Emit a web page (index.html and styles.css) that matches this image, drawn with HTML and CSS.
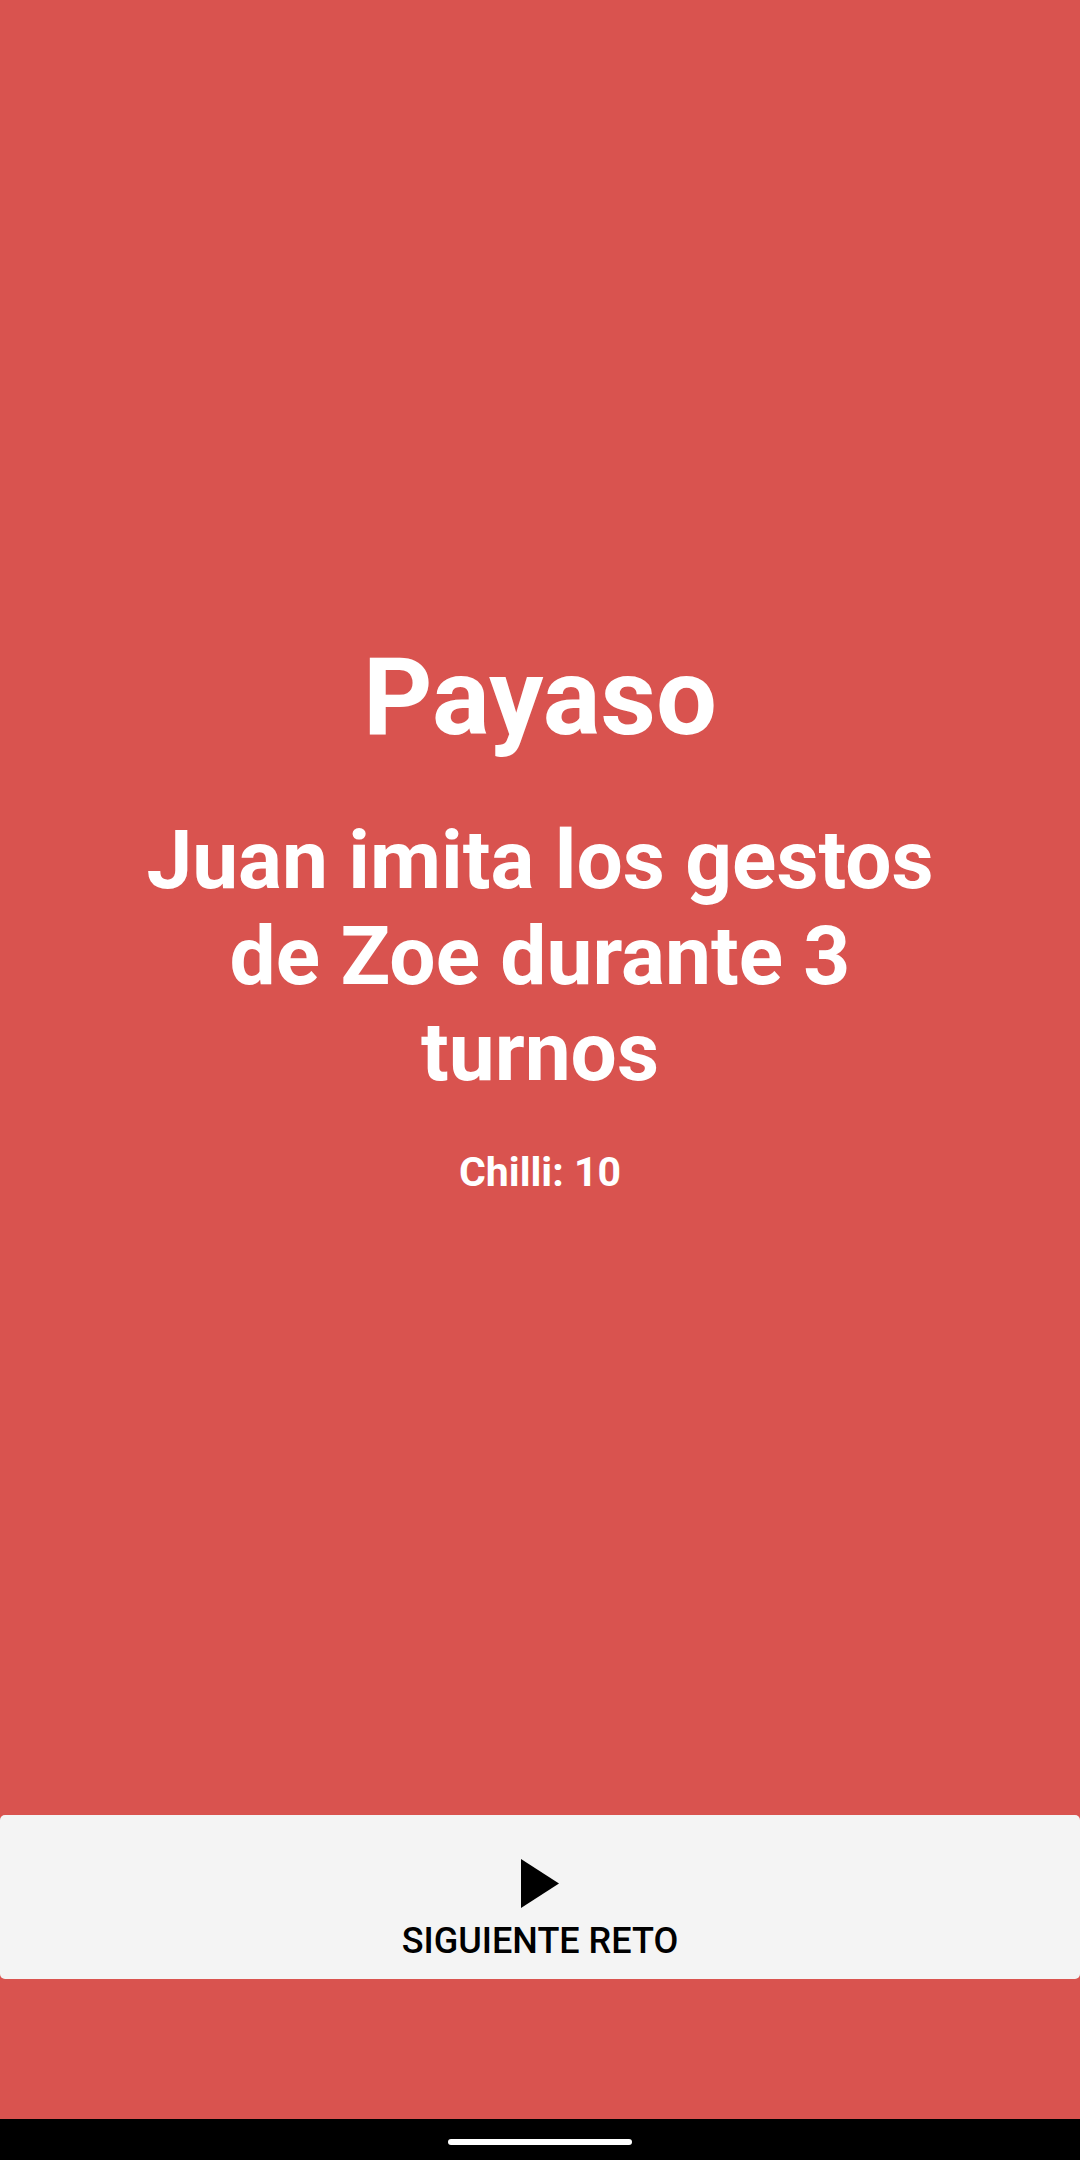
FILE: index.html
```html
<!DOCTYPE html>
<html lang="es">
<head>
<meta charset="utf-8">
<meta name="viewport" content="width=device-width, initial-scale=1">
<title>Payaso</title>
<link rel="stylesheet" href="styles.css">
</head>
<body>
<main class="challenge">
  <section class="card">
    <h1 class="title">Payaso</h1>
    <p class="description">Juan imita los gestos de Zoe durante 3 turnos</p>
    <p class="score">Chilli: 10</p>
  </section>
  <button class="next" type="button">
    <svg class="next-icon" viewBox="0 0 38 49" aria-hidden="true"><path d="M0 0v49l38-24.500z"/></svg>
    <span>SIGUIENTE RETO</span>
  </button>
</main>
<footer class="navbar"><div class="handle"></div></footer>
</body>
</html>
```

FILE: styles.css
```css
* {
  box-sizing: border-box;
}

body {
  margin: 0;
  min-height: 100vh;
  display: flex;
  flex-direction: column;
  background: #d9534f;
  color: #fff;
  font-family: Roboto, "Liberation Sans", sans-serif;
}

.challenge {
  flex: 1;
  display: flex;
  flex-direction: column;
  padding-bottom: 140px;
}

.card {
  flex: 1;
  display: flex;
  flex-direction: column;
  align-items: center;
  justify-content: center;
  gap: 48px;
  padding: 10px 136px 0;
  text-align: center;
  font-weight: 700;
}

.title,
.description,
.score {
  margin: 0;
}

.title {
  font-size: 108px;
  line-height: 134px;
}

.description {
  font-size: 82px;
  line-height: 96px;
}

.score {
  font-size: 41px;
  line-height: 48px;
}

.next {
  width: 100%;
  height: 164px;
  display: flex;
  flex-direction: column;
  align-items: center;
  gap: 12px;
  padding: 44px 0 0;
  border: 0;
  border-radius: 5px;
  background: #f4f4f4;
  color: #000;
  font-family: inherit;
  font-size: 36px;
  font-weight: 500;
  line-height: 42px;
}

.next-icon {
  width: 38px;
  height: 49px;
}

.navbar {
  height: 41px;
  display: flex;
  align-items: center;
  justify-content: center;
  padding-top: 5px;
  background: #000;
}

.handle {
  width: 184px;
  height: 6px;
  border-radius: 3px;
  background: #fff;
}
```
